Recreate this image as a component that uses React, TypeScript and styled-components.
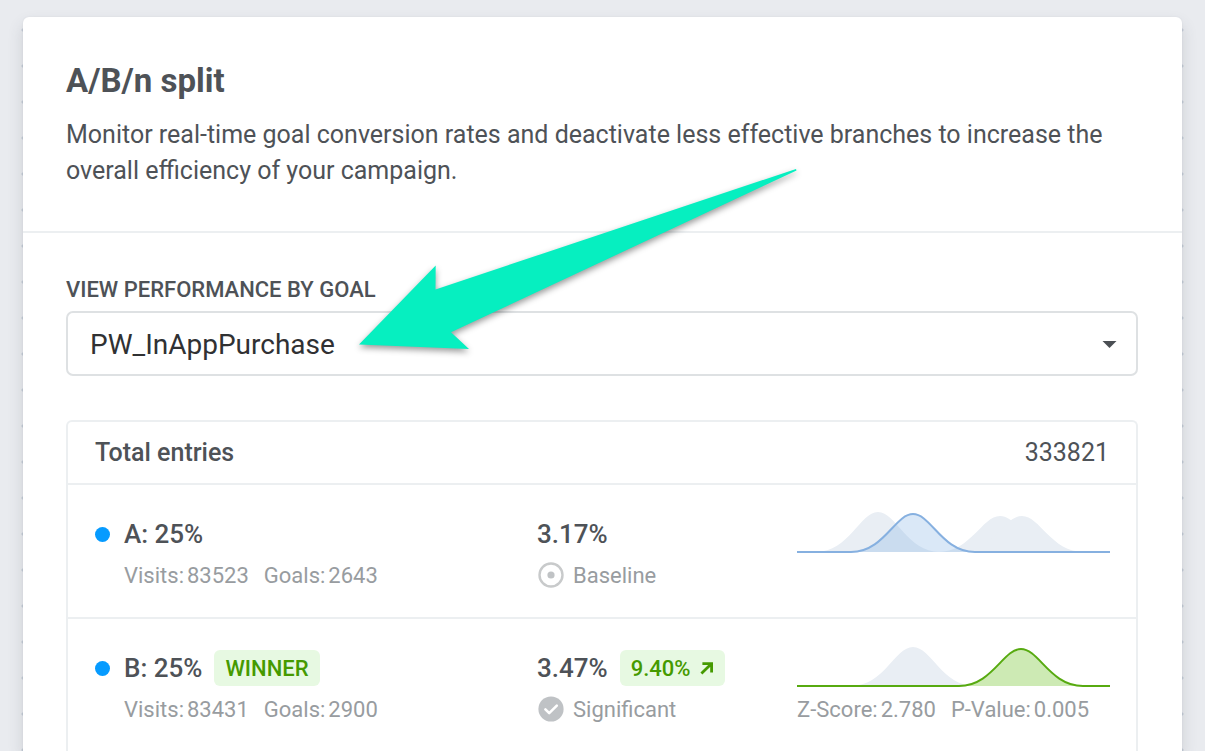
import React from "react";
import styled, { createGlobalStyle } from "styled-components";

const GlobalStyle = createGlobalStyle`
  *, *::before, *::after { box-sizing: border-box; }
  body {
    margin: 0;
    background: #e9ebef;
    color: #4e5257;
    font-family: Roboto, "Liberation Sans", sans-serif;
    -webkit-font-smoothing: antialiased;
  }
`;

const Page = styled.main`
  display: flex;
  min-height: 100vh;
  padding: 17px 23px 0;
`;

const Card = styled.section`
  position: relative;
  flex: 1;
  min-width: 0;
  background: #fff;
  border-radius: 6px 6px 0 0;
  box-shadow: 0 8px 16px rgba(60, 70, 80, 0.16), 0 0 2px rgba(60, 70, 80, 0.08);

  &::before {
    content: "";
    position: absolute;
    inset: 0 -2px;
    z-index: -1;
    background:
      radial-gradient(circle, #c6ced8 1px, transparent 2px) left -5px / 4px 36px repeat-y,
      radial-gradient(circle, #c6ced8 1px, transparent 2px) right -5px / 4px 36px repeat-y;
  }
`;

const Header = styled.header`
  padding: 44px 44px 42px 43px;
  border-bottom: 2px solid #eceff1;
`;

const Title = styled.h1`
  margin: 0 0 16px;
  font-size: 33px;
  line-height: 40px;
  font-weight: 700;
`;

const Description = styled.p`
  margin: 0;
  font-size: 25px;
  line-height: 36px;
`;

const Body = styled.div`
  padding: 43px 44px 0 43px;
`;

const FieldLabel = styled.label`
  display: block;
  margin-bottom: 7px;
  font-size: 22px;
  line-height: 28px;
  font-weight: 500;
  text-transform: uppercase;
`;

const SelectBox = styled.div`
  display: grid;
  align-items: center;
  margin-bottom: 44px;

  > * { grid-area: 1 / 1; }
`;

const Select = styled.select`
  appearance: none;
  width: 100%;
  height: 65px;
  padding: 2px 60px 0 22px;
  border: 2px solid #dee1e3;
  border-radius: 7px;
  background: #fff;
  color: #303133;
  font: 400 28px/36px Roboto, "Liberation Sans", sans-serif;
`;

const Caret = styled.svg`
  justify-self: end;
  margin-right: 21px;
  pointer-events: none;
`;

const Table = styled.table`
  width: 100%;
  table-layout: fixed;
  border: 2px solid #eceff1;
  border-bottom: 0;
  border-radius: 6px 6px 0 0;
  border-spacing: 0;
`;

const Col = styled.col<{ $width?: number }>`
  width: ${(p) => (p.$width ? `${p.$width}px` : "auto")};
`;

const HeadCell = styled.th<{ $end?: boolean }>`
  padding: 13px 27px 12px;
  border-bottom: 2px solid #eceff1;
  font-size: 25px;
  line-height: 36px;
  font-weight: ${(p) => (p.$end ? 400 : 500)};
  text-align: ${(p) => (p.$end ? "right" : "left")};
`;

const Row = styled.tr`
  &:not(:last-child) > td { border-bottom: 2px solid #eceff1; }
`;

const Cell = styled.td<{ $first?: boolean }>`
  padding: 31px 0 27px ${(p) => (p.$first ? 27 : 0)}px;
  vertical-align: top;
`;

const ChartCell = styled.td`
  padding: 24px 26px 0 0;
  vertical-align: top;
`;

const Line = styled.div`
  display: flex;
  align-items: center;
  height: 36px;
  font-size: 26px;
  font-weight: 500;
  white-space: nowrap;
`;

const Dot = styled.span`
  width: 15px;
  height: 15px;
  margin-right: 14px;
  border-radius: 50%;
  background: #069bff;
`;

const Tag = styled.span`
  display: inline-flex;
  align-items: center;
  gap: 9px;
  height: 36px;
  margin-left: 12px;
  padding: 0 11px;
  border-radius: 6px;
  background: #e7f9e2;
  color: #459a00;
  font-size: 22px;
  font-weight: 500;
`;

const Meta = styled.div<{ $indent?: boolean; $top?: number }>`
  display: flex;
  align-items: center;
  gap: 15px;
  height: 30px;
  margin-top: ${(p) => p.$top ?? 8}px;
  padding-left: ${(p) => (p.$indent ? 29 : 0)}px;
  color: #989ca0;
  font-size: 22px;
  white-space: nowrap;
`;

const Pair = styled.span`
  display: inline-flex;
  gap: 3px;
`;

const Status = styled(Meta)`
  gap: 9px;
  padding-left: 1px;
`;

const Chart = styled.svg`
  display: block;
  width: 100%;
  height: 44px;
`;

const Arrow = styled.svg`
  position: absolute;
  left: 327px;
  top: 143px;
  pointer-events: none;
  filter: drop-shadow(0 3px 3px rgba(0, 0, 0, 0.4));
`;

const BASE = 43;

/* Bell curve along the full width of a 313-unit chart. */
function bell(x: number, height: number) {
  const top = BASE - height;
  return (
    `M0 ${BASE}H${x - 62}` +
    `C${x - 29} ${BASE} ${x - 18} ${top} ${x} ${top}` +
    `C${x + 18} ${top} ${x + 29} ${BASE} ${x + 62} ${BASE}H313`
  );
}

interface Curve {
  center: number;
  height: number;
}

interface DistributionProps {
  others: Curve[];
  current: Curve;
  stroke: string;
  fill: string;
}

function Distribution({ others, current, stroke, fill }: DistributionProps) {
  const line = bell(current.center, current.height);
  return (
    <Chart viewBox="0 0 313 44" preserveAspectRatio="none" aria-hidden="true">
      {others.map((c) => (
        <path key={c.center} d={`${bell(c.center, c.height)}Z`} fill="#e9eef4" />
      ))}
      <path d={`${line}Z`} fill={fill} />
      <path d={line} fill="none" stroke={stroke} strokeWidth="2" />
    </Chart>
  );
}

function Stat({ label, value }: { label: string; value: string }) {
  return (
    <Pair>
      <span>{label}:</span>
      <span>{value}</span>
    </Pair>
  );
}

function TargetIcon() {
  return (
    <svg width="26" height="26" viewBox="0 0 26 26" aria-hidden="true">
      <circle cx="13" cy="13" r="11.5" fill="none" stroke="#c8cacb" strokeWidth="2.4" />
      <circle cx="13" cy="13" r="3.6" fill="#c0c3c5" />
    </svg>
  );
}

function CheckIcon() {
  return (
    <svg width="26" height="26" viewBox="0 0 26 26" aria-hidden="true">
      <circle cx="13" cy="13" r="12.6" fill="#bfc2c5" />
      <path
        d="M7.4 13.4l3.8 3.8 7.6-7.6"
        fill="none"
        stroke="#fff"
        strokeWidth="2.6"
        strokeLinecap="round"
        strokeLinejoin="round"
      />
    </svg>
  );
}

function TrendIcon() {
  return (
    <svg width="14" height="14" viewBox="0 0 14 14" aria-hidden="true">
      <path d="M2.4 2.6h9.2v8.8M11.4 2.8L1.4 12.4" fill="none" stroke="#459a00" strokeWidth="2.8" />
    </svg>
  );
}

export default function App() {
  return (
    <>
      <GlobalStyle />
      <Page>
        <Card>
          <Header>
            <Title>A/B/n split</Title>
            <Description>
              Monitor real-time goal conversion rates and deactivate less effective branches to
              increase the overall efficiency of your campaign.
            </Description>
          </Header>
          <Body>
            <FieldLabel htmlFor="goal">View performance by goal</FieldLabel>
            <SelectBox>
              <Select id="goal" defaultValue="PW_InAppPurchase">
                <option>PW_InAppPurchase</option>
              </Select>
              <Caret width="15" height="8" viewBox="0 0 15 8" aria-hidden="true">
                <path d="M.5 1h14l-7 7z" fill="#4b4f54" />
              </Caret>
            </SelectBox>
            <Table>
              <colgroup>
                <Col />
                <Col $width={260} />
                <Col $width={339} />
              </colgroup>
              <thead>
                <tr>
                  <HeadCell scope="col" colSpan={2}>Total entries</HeadCell>
                  <HeadCell as="td" $end>333821</HeadCell>
                </tr>
              </thead>
              <tbody>
                <Row>
                  <Cell $first>
                    <Line><Dot />A: 25%</Line>
                    <Meta $indent>
                      <Stat label="Visits" value="83523" />
                      <Stat label="Goals" value="2643" />
                    </Meta>
                  </Cell>
                  <Cell>
                    <Line>3.17%</Line>
                    <Status><TargetIcon />Baseline</Status>
                  </Cell>
                  <ChartCell>
                    <Distribution
                      others={[
                        { center: 81, height: 40 },
                        { center: 203, height: 36 },
                        { center: 225, height: 36 },
                      ]}
                      current={{ center: 116, height: 38 }}
                      stroke="#86b0e0"
                      fill="rgba(131, 178, 228, 0.3)"
                    />
                  </ChartCell>
                </Row>
                <Row>
                  <Cell $first>
                    <Line><Dot />B: 25%<Tag>WINNER</Tag></Line>
                    <Meta $indent>
                      <Stat label="Visits" value="83431" />
                      <Stat label="Goals" value="2900" />
                    </Meta>
                  </Cell>
                  <Cell>
                    <Line>3.47%<Tag>9.40%<TrendIcon /></Tag></Line>
                    <Status><CheckIcon />Significant</Status>
                  </Cell>
                  <ChartCell>
                    <Distribution
                      others={[{ center: 116, height: 39 }]}
                      current={{ center: 224, height: 37 }}
                      stroke="#57aa10"
                      fill="#cdeab4"
                    />
                    <Meta $top={7}>
                      <Stat label="Z-Score" value="2.780" />
                      <Stat label="P-Value" value="0.005" />
                    </Meta>
                  </ChartCell>
                </Row>
              </tbody>
            </Table>
          </Body>
          <Arrow width="460" height="200" viewBox="0 0 460 200" aria-hidden="true">
            <path
              d="M9 184.5L85.7 105.5L85.5 129.5L446 9L446.5 10.5L101 172.3L119 189Z"
              fill="#06efc0"
            />
          </Arrow>
        </Card>
      </Page>
    </>
  );
}
